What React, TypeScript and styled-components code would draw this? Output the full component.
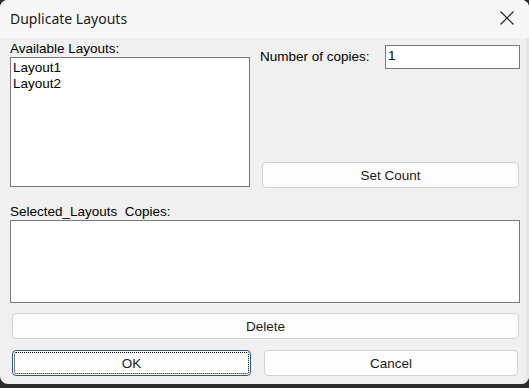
import React from "react";
import styled, { createGlobalStyle } from "styled-components";

const Global = createGlobalStyle`
  html, body { margin: 0; padding: 0; background: #2b2b2b; }
  body { width: 529px; height: 388px; overflow: hidden; }
  * { box-sizing: border-box; }
`;

const Window = styled.div`
  width: 529px;
  height: 384px;
  background: #f0f0f0;
  border-radius: 8px;
  overflow: hidden;
  display: flex;
  flex-direction: column;
  font-family: "Liberation Sans", Arial, sans-serif;
  font-size: 13.5px;
  color: #000;
  box-shadow: inset -3px 0 0 #e6e6e6;
`;

const TitleBar = styled.div`
  height: 38px;
  flex: none;
  background: #f7f7f7;
  display: flex;
  align-items: center;
  justify-content: space-between;
  padding: 0 15px 2px 10px;
`;

const Title = styled.span`
  font-family: "Noto Sans", "Open Sans", sans-serif;
  font-size: 14px;
  color: #1a1a1a;
`;

const CloseBox = styled.div`
  width: 14px;
  height: 14px;
  display: flex;
`;

const Body = styled.div`
  flex: 1;
  display: flex;
  flex-direction: column;
  padding: 0 9px 0 10px;
`;

const TopGrid = styled.div`
  display: grid;
  grid-template-columns: 240px 1fr;
  column-gap: 10px;
`;

const Column = styled.div`
  display: flex;
  flex-direction: column;
`;

const Label = styled.div<{ $top?: number }>`
  line-height: 16px;
  height: 16px;
  margin-top: ${(p) => p.$top ?? 0}px;
  white-space: pre;
`;

const ListBox = styled.div<{ $h: number }>`
  height: ${(p) => p.$h}px;
  background: #fff;
  border: 1px solid #7a7a7a;
  padding: 2px 2px;
`;

const ListItem = styled.div`
  line-height: 16px;
  height: 16px;
`;

const CopiesRow = styled.div`
  display: flex;
  align-items: center;
  justify-content: space-between;
  margin-top: 7px;
`;

const NumberInput = styled.div`
  width: 135px;
  height: 24px;
  background: #fff;
  border: 1px solid #7a7a7a;
  padding: 0 2px;
  line-height: 20px;
`;

const Button = styled.div<{ $w?: string; $primary?: boolean }>`
  position: relative;
  height: 26px;
  width: ${(p) => p.$w ?? "auto"};
  background: #fdfdfd;
  border: 1px solid ${(p) => (p.$primary ? "#2a5a8a" : "#d2d2d2")};
  border-radius: 4px;
  display: flex;
  align-items: center;
  justify-content: center;
  color: #1a1a1a;
  ${(p) =>
    p.$primary
      ? `&::after { content: ""; position: absolute; inset: 1px; border: 1px dotted #000; border-radius: 2px; }`
      : ""}
`;

const SetCountWrap = styled.div`
  margin: 93px 1px 0 2px;
`;

const WideWrap = styled.div<{ $top: number }>`
  margin: ${(p) => p.$top}px 1px 0 2px;
`;

const ButtonRow = styled.div`
  display: flex;
  justify-content: space-between;
  margin: 11px 2px 0 2px;
`;

export default function App() {
  return (
    <>
      <Global />
      <Window>
        <TitleBar>
          <Title>Duplicate Layouts</Title>
          <CloseBox>
            <svg width="14" height="14" viewBox="0 0 14 14">
              <path d="M0.5 0.5 L13.5 13.5 M13.5 0.5 L0.5 13.5" stroke="#1a1a1a" strokeWidth="1.1" fill="none" />
            </svg>
          </CloseBox>
        </TitleBar>
        <Body>
          <TopGrid>
            <Column>
              <Label $top={3}>Available Layouts:</Label>
              <ListBox $h={130}>
                <ListItem>Layout1</ListItem>
                <ListItem>Layout2</ListItem>
              </ListBox>
            </Column>
            <Column>
              <CopiesRow>
                <Label>Number of copies:</Label>
                <NumberInput>1</NumberInput>
              </CopiesRow>
              <SetCountWrap>
                <Button>Set Count</Button>
              </SetCountWrap>
            </Column>
          </TopGrid>
          <Label $top={16}>Selected_Layouts  Copies:</Label>
          <ListBox $h={83} />
          <WideWrap $top={10}>
            <Button>Delete</Button>
          </WideWrap>
          <ButtonRow>
            <Button $w="239px" $primary>OK</Button>
            <Button $w="254px">Cancel</Button>
          </ButtonRow>
        </Body>
      </Window>
    </>
  );
}
